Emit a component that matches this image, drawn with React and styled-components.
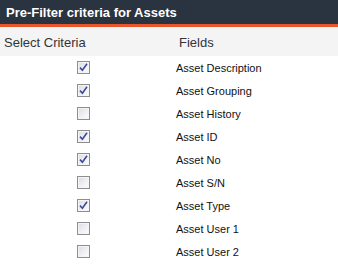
import React from 'react'
import styled, { createGlobalStyle } from 'styled-components'

const GlobalStyle = createGlobalStyle`
   body {
      margin: 0;
      background: #ffffff;
      font-family: 'Liberation Sans', Arial, sans-serif;
   }
`

const FIELDS = [
   { name: 'Asset Description', checked: true },
   { name: 'Asset Grouping', checked: true },
   { name: 'Asset History', checked: false },
   { name: 'Asset ID', checked: true },
   { name: 'Asset No', checked: true },
   { name: 'Asset S/N', checked: false },
   { name: 'Asset Type', checked: true },
   { name: 'Asset User 1', checked: false },
   { name: 'Asset User 2', checked: false },
]

const CheckBox = ({ checked }) => (
   <StyledBox>
      {checked && (
         <svg width="9" height="9" viewBox="0 0 9 9">
            <path
               d="M1 4.6 L3.4 7.2 L8 0.8"
               fill="none"
               stroke="#3b4a9a"
               strokeWidth="1.6"
            />
         </svg>
      )}
   </StyledBox>
)

export default function App() {
   return (
      <Panel>
         <GlobalStyle />
         <TitleBar>Pre-Filter criteria for Assets</TitleBar>
         <HeadRow>
            <HeadCell>Select Criteria</HeadCell>
            <HeadCell>Fields</HeadCell>
         </HeadRow>
         {FIELDS.map((f) => (
            <Row key={f.name}>
               <CheckCell>
                  <CheckBox checked={f.checked} />
               </CheckCell>
               <FieldName>{f.name}</FieldName>
            </Row>
         ))}
      </Panel>
   )
}

const Panel = styled.div`
   width: 338px;
   height: 267px;
   overflow: hidden;
   background: #ffffff;
`

const TitleBar = styled.div`
   height: 24px;
   padding-left: 6px;
   display: flex;
   align-items: center;
   background: #2a3340;
   border-bottom: 3px solid #e9552a;
   color: #ffffff;
   font-size: 13px;
   font-weight: bold;
`

const HeadRow = styled.div`
   height: 29px;
   display: grid;
   grid-template-columns: 175px 1fr;
   align-items: center;
   background: #f4f4f4;
   padding-left: 4px;
`

const HeadCell = styled.div`
   font-size: 13px;
   color: #33333a;
   padding-top: 1px;
`

const Row = styled.div`
   height: 23px;
   display: grid;
   grid-template-columns: 176px 1fr;
   align-items: center;
`

const CheckCell = styled.div`
   display: flex;
   padding-left: 77px;
`

const StyledBox = styled.span`
   box-sizing: border-box;
   width: 13px;
   height: 13px;
   display: flex;
   align-items: center;
   justify-content: center;
   border: 1px solid #8e8e8e;
   background: linear-gradient(135deg, #d9dce2 0%, #f2f2f4 60%, #fbfbfb 100%);
   box-shadow: inset 0 0 0 1px #f4f4f6;
`

const FieldName = styled.div`
   font-size: 11px;
   color: #111111;
`
